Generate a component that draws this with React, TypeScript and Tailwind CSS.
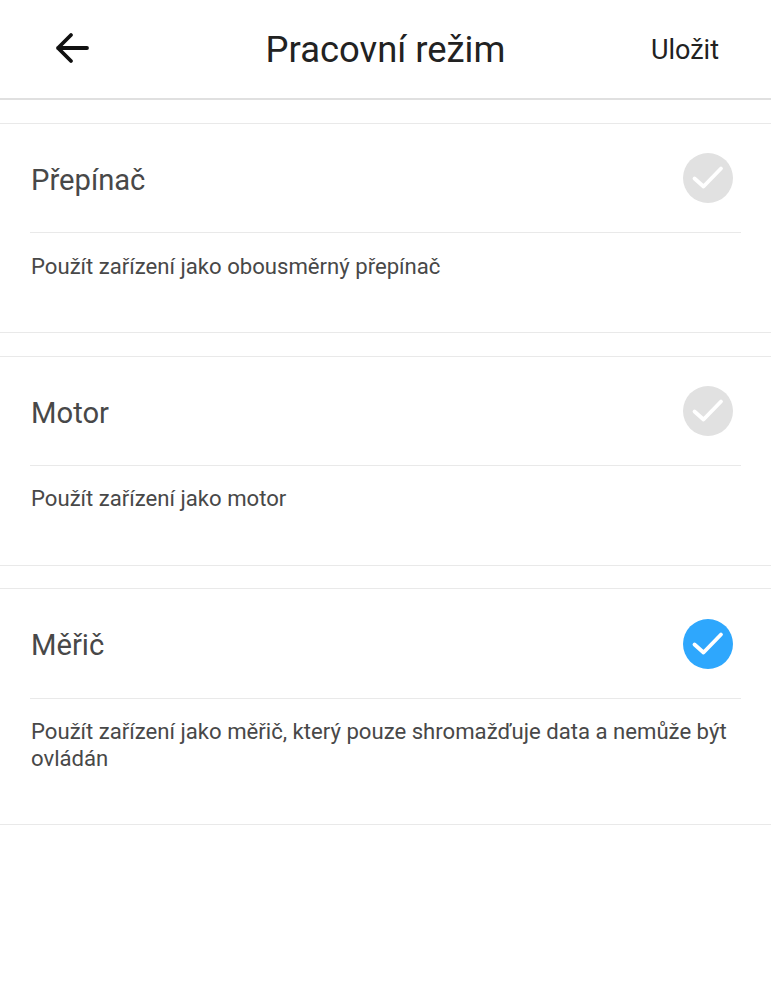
import React from "react";

type ModeProps = {
  title: string;
  description: string;
  selected?: boolean;
};

const CheckCircle: React.FC<{ selected?: boolean }> = ({ selected }) => (
  <div
    className={`flex h-[50px] w-[50px] items-center justify-center rounded-full ${
      selected ? "bg-[#2ea7fd]" : "bg-[#e1e1e1]"
    }`}
  >
    <svg width="50" height="50" viewBox="0 0 50 50" fill="none">
      <path
        d="M11.5 25.5 L20.5 33.5 L38 15.5"
        stroke="white"
        strokeWidth="3.8"
        strokeLinecap="round"
        strokeLinejoin="round"
      />
    </svg>
  </div>
);

const ModeCard: React.FC<ModeProps> = ({ title, description, selected }) => (
  <section className="border-y border-[#e9e9e9] bg-white">
    <div className="mx-[30px] flex h-[109.4px] items-center justify-between border-b border-[#e9e9e9] pr-[8px]">
      <h2 className="pl-px pt-[5px] text-[29.2px] leading-none text-[#484848]">{title}</h2>
      <CheckCircle selected={selected} />
    </div>
    <p className="pb-[52.1px] pl-[31px] pr-[30px] pt-[19.5px] text-[22.13px] leading-[27px] text-[#484848]">
      {description}
    </p>
  </section>
);

const modes: ModeProps[] = [
  {
    title: "Přepínač",
    description: "Použít zařízení jako obousměrný přepínač",
  },
  {
    title: "Motor",
    description: "Použít zařízení jako motor",
  },
  {
    title: "Měřič",
    description:
      "Použít zařízení jako měřič, který pouze shromažďuje data a nemůže být ovládán",
    selected: true,
  },
];

export default function App() {
  return (
    <div className="min-h-[1000px] bg-white font-['Roboto',sans-serif]">
      <header className="relative flex h-[100px] items-center justify-between border-b-2 border-[#e0e0e0] pl-[55px] pr-[52px]">
        <svg width="34" height="32" viewBox="0 0 34 32" fill="none" className="-mt-[3px]">
          <path
            d="M32 16 H3 M16 3 L3 16 L16 29"
            stroke="#111111"
            strokeWidth="3.8"
            strokeLinecap="round"
            strokeLinejoin="round"
          />
        </svg>
        <h1 className="absolute inset-x-0 pt-[2px] text-center text-[36.4px] leading-none text-[#222222]">
          Pracovní režim
        </h1>
        <button className="relative pt-[2px] text-[27px] leading-none text-[#222222]">Uložit</button>
      </header>
      <main className="flex flex-col gap-[22.85px] pt-[22.7px]">
        {modes.map((mode) => (
          <ModeCard key={mode.title} {...mode} />
        ))}
      </main>
    </div>
  );
}
